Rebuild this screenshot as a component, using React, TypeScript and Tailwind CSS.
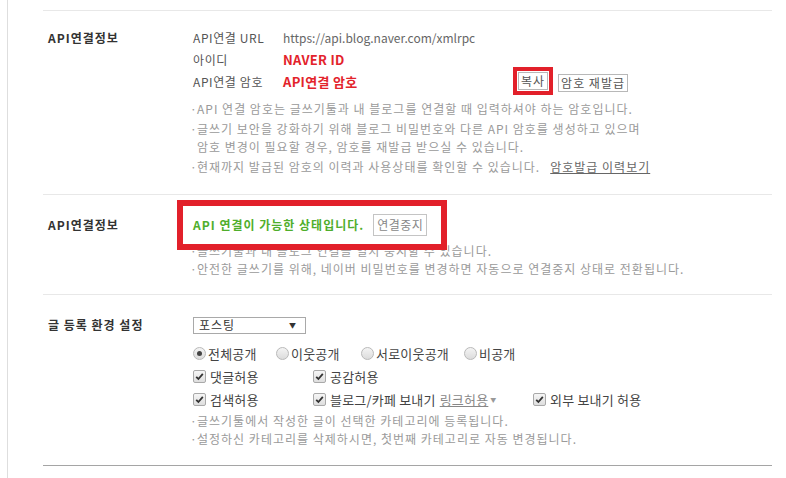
import React from 'react';

const font = { fontFamily: '"Noto Sans CJK KR", "Noto Sans", sans-serif' };

function Note({ children, className = '' }: { children: React.ReactNode; className?: string }) {
  return (
    <div className={`flex leading-[18px] text-[12px] tracking-[1px] text-[#9a9a9a] ${className}`}>
      <span className="w-[7px] shrink-0 -ml-[3px]">·</span>
      <div>{children}</div>
    </div>
  );
}

function Btn({ children }: { children: React.ReactNode }) {
  return (
    <span className="inline-flex items-center h-[18px] px-[2px] border border-[#b8b8b8] bg-white text-[12px] tracking-[1px] leading-none text-[#555]">
      {children}
    </span>
  );
}

function Radio({ checked }: { checked?: boolean }) {
  return (
    <span className="inline-flex items-center justify-center w-[13px] h-[13px] rounded-full border border-[#b9b9b9] bg-gradient-to-b from-[#f4f4f4] to-[#dcdcdc]">
      {checked && <span className="w-[5px] h-[5px] rounded-full bg-[#444]" />}
    </span>
  );
}

function Check() {
  return (
    <span className="inline-flex items-center justify-center w-[13px] h-[13px] rounded-[2px] border border-[#a9a9a9] bg-gradient-to-b from-[#f6f6f6] to-[#dedede]">
      <svg width="9" height="9" viewBox="0 0 9 9">
        <path d="M1.2 4.8 L3.4 7 L7.8 1.8" fill="none" stroke="#333" strokeWidth="1.8" />
      </svg>
    </span>
  );
}

function Label({ children }: { children: React.ReactNode }) {
  return (
    <div className="w-[150px] shrink-0 pl-[5px] text-[12px] tracking-[1px] font-bold text-[#333] leading-[22px]">{children}</div>
  );
}

export default function App() {
  return (
    <div className="w-[786px] h-[478px] bg-white flex overflow-hidden" style={font}>
      <div className="w-[7px] shrink-0" />
      <div className="flex-1 border-l border-[#dedede] pl-[35px] pr-[14px] pt-[10px]">
        {/* section 1 */}
        <section className="flex border-t border-[#e8e8e8] pt-[16px] pb-[18px]">
          <Label>API연결정보</Label>
          <div className="flex-1">
            <div className="flex h-[22px] items-center text-[12px] text-[#555]">
              <span className="w-[90px] tracking-[0.6px]">API연결 URL</span>
              <span className="text-[#666]">https://api.blog.naver.com/xmlrpc</span>
            </div>
            <div className="flex h-[22px] items-center text-[12px] text-[#555]">
              <span className="w-[90px] tracking-[0.6px]">아이디</span>
              <span className="font-bold text-[13px] tracking-[0.3px] text-[#e3232b]">NAVER ID</span>
            </div>
            <div className="flex h-[22px] items-center text-[12px] text-[#555]">
              <span className="w-[90px] tracking-[0.6px]">API연결 암호</span>
              <span className="w-[230px] font-bold text-[13px] tracking-[0.3px] text-[#e3232b]">API연결 암호</span>
              <span className="inline-flex items-center border-[4px] border-[#e2202a] p-[1px] mt-[-2px]">
                <Btn>복사</Btn>
              </span>
              <span className="ml-[5px] mt-[2px]">
                <Btn>암호 재발급</Btn>
              </span>
            </div>
            <div className="mt-[7px] flex flex-col gap-[2px]">
              <Note>API 연결 암호는 글쓰기툴과 내 블로그를 연결할 때 입력하셔야 하는 암호입니다.</Note>
              <Note>
                글쓰기 보안을 강화하기 위해 블로그 비밀번호와 다른 API 암호를 생성하고 있으며
                <br />
                암호 변경이 필요할 경우, 암호를 재발급 받으실 수 있습니다.
              </Note>
              <Note>
                현재까지 발급된 암호의 이력과 사용상태를 확인할 수 있습니다.
                <span className="ml-[10px] underline text-[#666]">암호발급 이력보기</span>
              </Note>
            </div>
          </div>
        </section>

        {/* section 2 */}
        <section className="flex border-t border-[#e8e8e8] pt-[19px] pb-[16px]">
          <Label>API연결정보</Label>
          <div className="flex-1 relative">
            <div className="flex h-[22px] items-center">
              <span className="text-[12px] font-bold tracking-[1px] text-[#4fae2c]">API 연결이 가능한 상태입니다.</span>
              <span className="ml-[9px] inline-flex items-center h-[22px] px-[3px] border border-[#c4c4c4] text-[12px] tracking-[0.5px] text-[#888]">
                연결중지
              </span>
            </div>
            <div className="mt-[6px]">
              <Note>글쓰기툴과 내 블로그 연결을 일시 중지할 수 있습니다.</Note>
              <Note>안전한 글쓰기를 위해, 네이버 비밀번호를 변경하면 자동으로 연결중지 상태로 전환됩니다.</Note>
            </div>
            <div className="absolute left-[-16px] top-[-14px] w-[270px] h-[50px] border-[6px] border-[#e2202a]" />
          </div>
        </section>

        {/* section 3 */}
        <section className="flex border-t border-[#e8e8e8] pt-[19px] pb-[17px] border-b border-b-[#a5a5a5]">
          <Label>글 등록 환경 설정</Label>
          <div className="flex-1">
            <div className="flex h-[22px] items-center">
              <div className="w-[113px] h-[17px] border border-[#a9a9a9] flex items-center justify-between pl-[5px] pr-[8px] text-[12px] tracking-[1px] text-[#333]">
                <span>포스팅</span>
                <span className="text-[7px] text-[#333]">▼</span>
              </div>
            </div>
            <div className="mt-[6px] flex h-[23px] items-center text-[13px] tracking-[0.2px] text-[#444]">
              <span className="w-[83px] flex items-center gap-[2px]"><Radio checked />전체공개</span>
              <span className="w-[85px] flex items-center gap-[2px]"><Radio />이웃공개</span>
              <span className="w-[103px] flex items-center gap-[2px]"><Radio />서로이웃공개</span>
              <span className="flex items-center gap-[2px]"><Radio />비공개</span>
            </div>
            <div className="flex h-[23px] items-center text-[13px] tracking-[0.2px] text-[#444]">
              <span className="w-[120px] flex items-center gap-[4px]"><Check />댓글허용</span>
              <span className="flex items-center gap-[4px]"><Check />공감허용</span>
            </div>
            <div className="flex h-[23px] items-center text-[13px] tracking-[0.2px] text-[#444]">
              <span className="w-[120px] flex items-center gap-[4px]"><Check />검색허용</span>
              <span className="w-[220px] flex items-center gap-[4px]">
                <Check />블로그/카페 보내기
                <span className="underline text-[#888]">링크허용</span>
                <span className="text-[6px] text-[#999] -ml-[2px]">▼</span>
              </span>
              <span className="flex items-center gap-[4px]"><Check />외부 보내기 허용</span>
            </div>
            <div className="mt-[1px]">
              <Note>글쓰기툴에서 작성한 글이 선택한 카테고리에 등록됩니다.</Note>
              <Note>설정하신 카테고리를 삭제하시면, 첫번째 카테고리로 자동 변경됩니다.</Note>
            </div>
          </div>
        </section>
      </div>
    </div>
  );
}
